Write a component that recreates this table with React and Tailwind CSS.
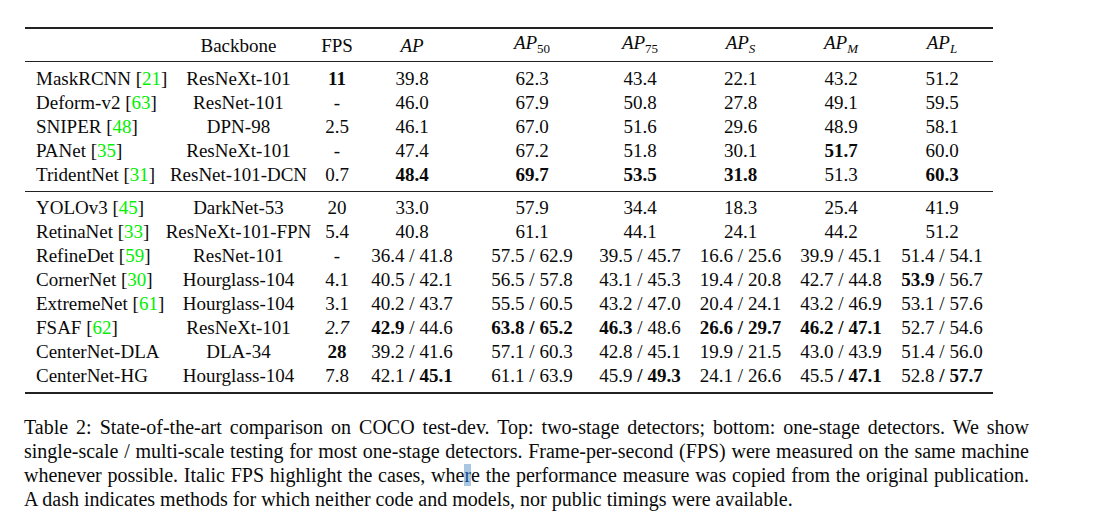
const top = [
  ['MaskRCNN', '21', 'ResNeXt-101', '**11**', '39.8', '62.3', '43.4', '22.1', '43.2', '51.2'],
  ['Deform-v2', '63', 'ResNet-101', '-', '46.0', '67.9', '50.8', '27.8', '49.1', '59.5'],
  ['SNIPER', '48', 'DPN-98', '2.5', '46.1', '67.0', '51.6', '29.6', '48.9', '58.1'],
  ['PANet', '35', 'ResNeXt-101', '-', '47.4', '67.2', '51.8', '30.1', '**51.7**', '60.0'],
  ['TridentNet', '31', 'ResNet-101-DCN', '0.7', '**48.4**', '**69.7**', '**53.5**', '**31.8**', '51.3', '**60.3**'],
]

const bottom = [
  ['YOLOv3', '45', 'DarkNet-53', '20', '33.0', '57.9', '34.4', '18.3', '25.4', '41.9'],
  ['RetinaNet', '33', 'ResNeXt-101-FPN', '5.4', '40.8', '61.1', '44.1', '24.1', '44.2', '51.2'],
  ['RefineDet', '59', 'ResNet-101', '-', '36.4 / 41.8', '57.5 / 62.9', '39.5 / 45.7', '16.6 / 25.6', '39.9 / 45.1', '51.4 / 54.1'],
  ['CornerNet', '30', 'Hourglass-104', '4.1', '40.5 / 42.1', '56.5 / 57.8', '43.1 / 45.3', '19.4 / 20.8', '42.7 / 44.8', '**53.9** / 56.7'],
  ['ExtremeNet', '61', 'Hourglass-104', '3.1', '40.2 / 43.7', '55.5 / 60.5', '43.2 / 47.0', '20.4 / 24.1', '43.2 / 46.9', '53.1 / 57.6'],
  ['FSAF', '62', 'ResNeXt-101', '_2.7', '**42.9** / 44.6', '**63.8 / 65.2**', '**46.3** / 48.6', '**26.6 / 29.7**', '**46.2 / 47.1**', '52.7 / 54.6'],
  ['CenterNet-DLA', null, 'DLA-34', '**28**', '39.2 / 41.6', '57.1 / 60.3', '42.8 / 45.1', '19.9 / 21.5', '43.0 / 43.9', '51.4 / 56.0'],
  ['CenterNet-HG', null, 'Hourglass-104', '7.8', '42.1 **/ 45.1**', '61.1 / 63.9', '45.9 **/ 49.3**', '24.1 / 26.6', '45.5 **/ 47.1**', '52.8 **/ 57.7**'],
]

const grid = 'grid grid-cols-[128px_171px_26px_124px_116px_100px_101px_100px_102px]'

// "**x**" -> bold, leading "_" -> italic
function Val({ v }) {
  if (v.startsWith('_')) return <span className="italic">{v.slice(1)}</span>
  return v.split('**').map((part, i) =>
    i % 2 ? <b key={i} className="font-bold">{part}</b> : <span key={i} className="whitespace-pre">{part}</span>
  )
}

function Cell({ children }) {
  return <div className="flex justify-center whitespace-nowrap">{children}</div>
}

function Row({ r }) {
  const [name, ref, backbone, ...vals] = r
  return (
    <div className={`${grid} h-[24px] items-center`}>
      <div className="pl-[11px] whitespace-nowrap">
        {name}
        {ref && (
          <> [<span className="text-[#00f000]">{ref}</span>]</>
        )}
      </div>
      <Cell>{backbone}</Cell>
      {vals.map((v, i) => (
        <Cell key={i}><Val v={v} /></Cell>
      ))}
    </div>
  )
}

function AP({ sub, it }) {
  return (
    <span className="italic">
      AP
      {sub && (
        <span className={`text-[13px] align-[-4px] ${it ? 'italic' : 'not-italic'}`}>{sub}</span>
      )}
    </span>
  )
}

function Line({ children, last }) {
  return (
    <div className={last ? 'whitespace-nowrap' : 'whitespace-nowrap text-justify [text-align-last:justify]'}>{children}</div>
  )
}

export default function App() {
  return (
    <div className="w-[1099px] h-[526px] bg-white text-[#0a0a0a] font-['Liberation_Serif',serif] overflow-hidden">
      <div className="pt-[27px] pl-[25px]">
        <div className="w-[968px] text-[19px] leading-[24px]">
          {/* header */}
          <div className={`${grid} h-[35px] items-center border-t-2 border-b border-[#222] pt-[2px]`}>
            <div />
            <Cell>Backbone</Cell>
            <Cell>FPS</Cell>
            <Cell><AP /></Cell>
            <Cell><AP sub="50" /></Cell>
            <Cell><AP sub="75" /></Cell>
            <Cell><AP sub="S" it /></Cell>
            <Cell><AP sub="M" it /></Cell>
            <Cell><AP sub="L" it /></Cell>
          </div>

          {/* two-stage */}
          <div className="py-[4.5px] border-b border-[#222]">
            {top.map(r => <Row key={r[0]} r={r} />)}
          </div>

          {/* one-stage */}
          <div className="py-[4px] border-b-2 border-[#222]">
            {bottom.map(r => <Row key={r[0]} r={r} />)}
          </div>
        </div>
      </div>

      {/* caption */}
      <div className="mt-[21px] ml-[24px] w-[1005px] text-[20px] leading-[24px]">
        <Line>Table 2: State-of-the-art comparison on COCO test-dev. Top: two-stage detectors; bottom: one-stage detectors. We show</Line>
        <Line>single-scale / multi-scale testing for most one-stage detectors. Frame-per-second (FPS) were measured on the same machine</Line>
        <Line>
          whenever possible. Italic FPS highlight the cases, whe<span className="bg-[#a9c6e3] text-[#1b4f86]">r</span>e the performance measure was copied from the original publication.
        </Line>
        <Line last>A dash indicates methods for which neither code and models, nor public timings were available.</Line>
      </div>
    </div>
  )
}
